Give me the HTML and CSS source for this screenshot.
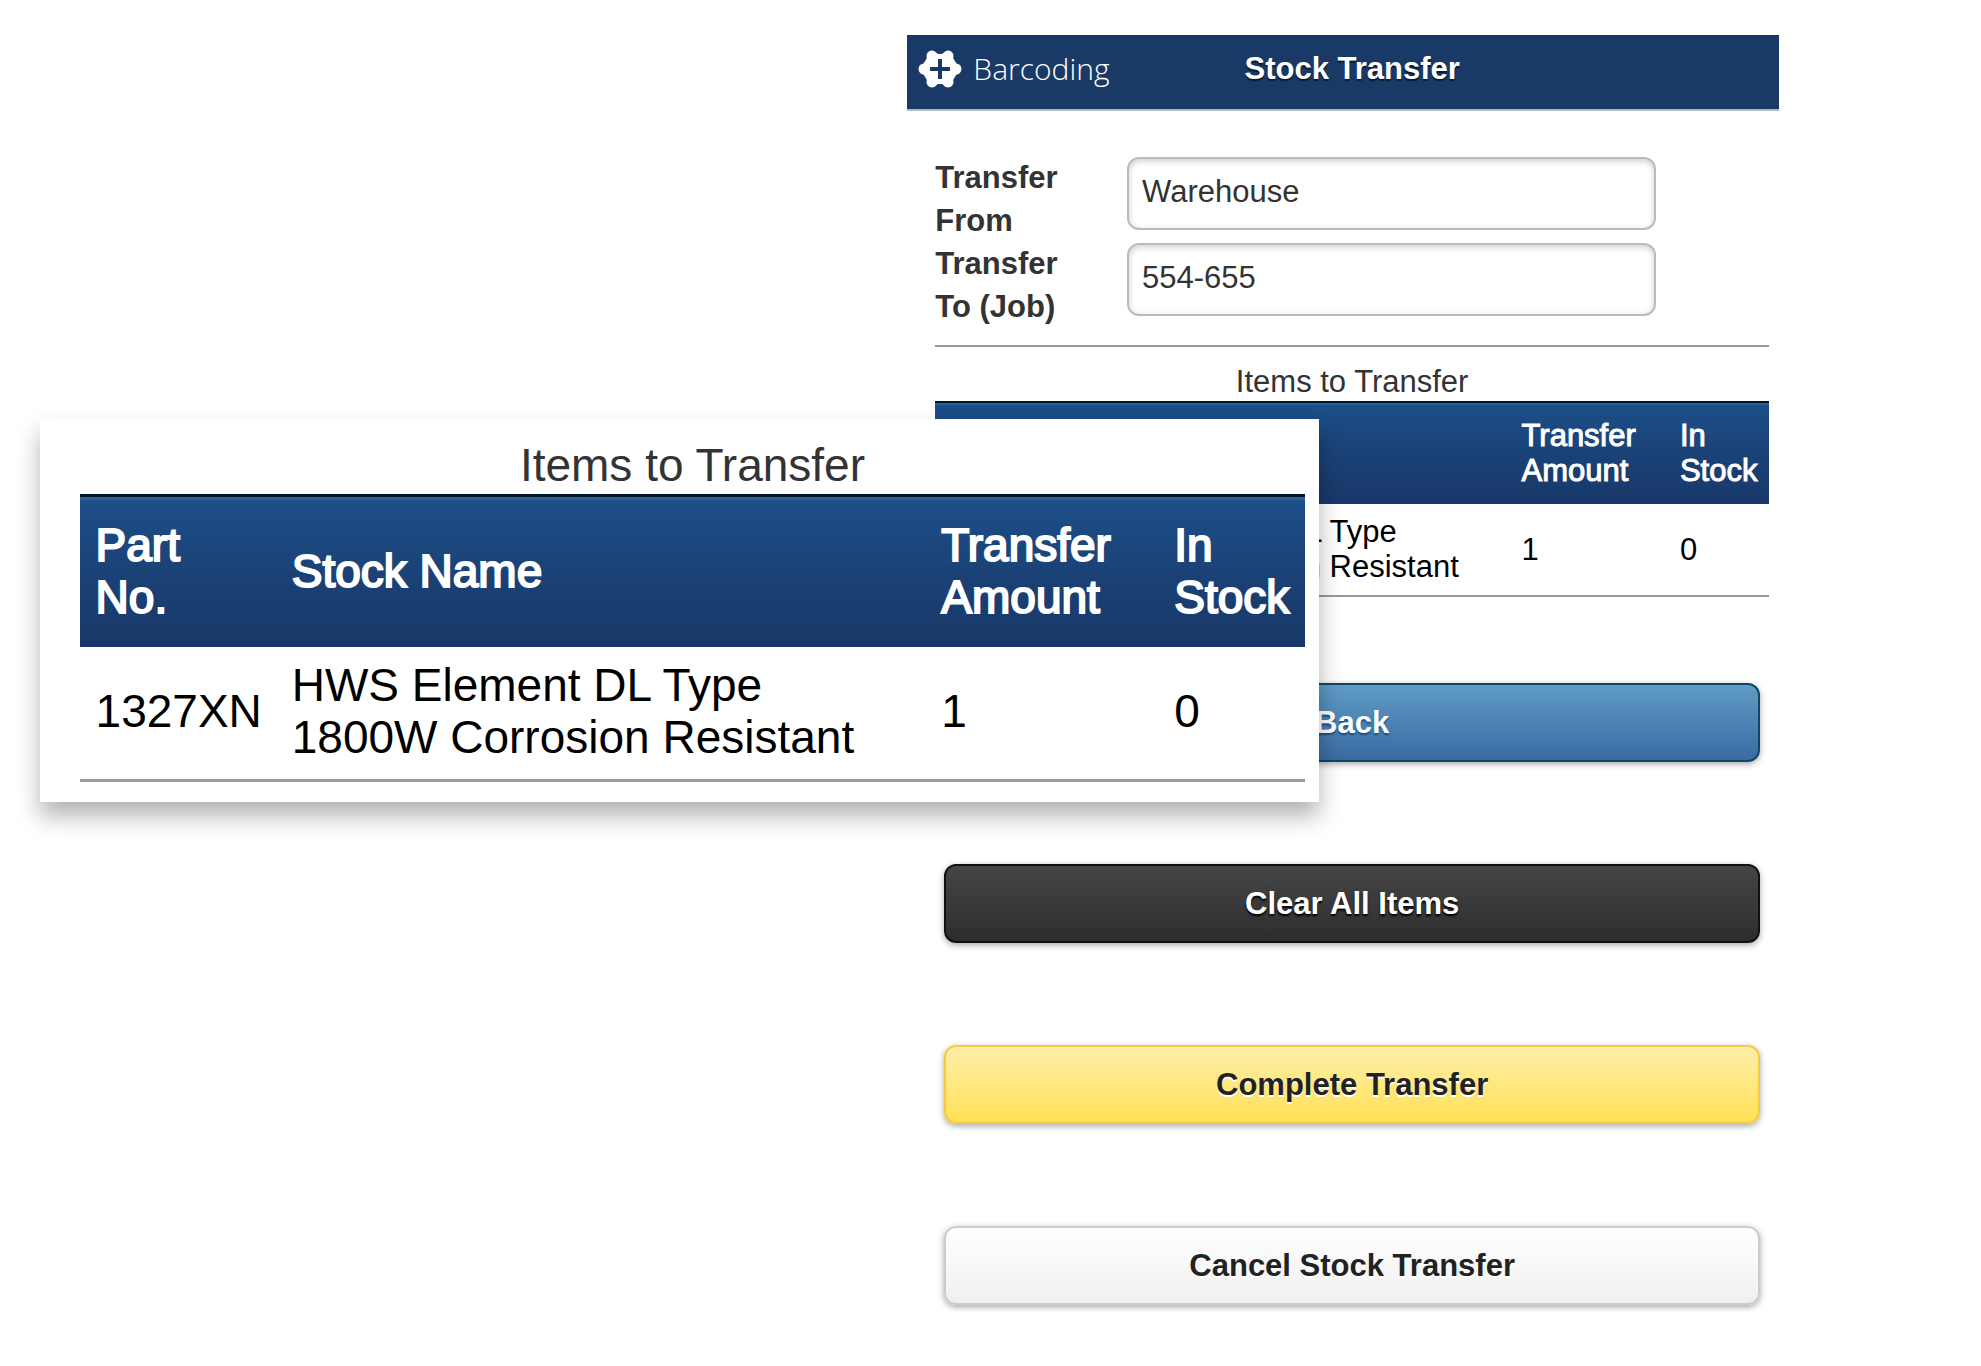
FILE: index.html
```html
<!DOCTYPE html>
<html lang="en">
<head>
  <meta charset="UTF-8" />
  <meta name="viewport" content="width=device-width, initial-scale=1.0" />
  <title>Stock Transfer</title>
  <link rel="stylesheet" href="styles.css">
</head>
<body>
  <main class="stage">
    <div class="screen">
      <header class="top-bar">
        <a class="brand" href="#">
          <svg class="brand-icon" viewBox="-22 -20 44 40" aria-hidden="true">
            <path d="M-18 0L-9-15Q0-12 9-15L18 0L9 15Q0 12-9 15Z" fill="#fff" stroke="#fff" stroke-width="3" stroke-linejoin="round" />
            <path d="M-16 0H16M-8-13L8 13M8-13L-8 13" stroke="#fff" stroke-width="11" stroke-linecap="round" />
            <path d="M-10 0H10M0-10V10" stroke="#193966" stroke-width="4" />
          </svg>
          <span>Barcoding</span>
        </a>
        <h1 class="title">Stock Transfer</h1>
      </header>

      <form class="content" onsubmit="return false">
        <div class="field">
          <label for="transfer-from">Transfer From</label>
          <input type="text" id="transfer-from" value="Warehouse">
        </div>
        <div class="field">
          <label for="transfer-to">Transfer To (Job)</label>
          <input type="text" id="transfer-to" value="554-655">
        </div>
        <hr>

        <table class="items">
          <caption>Items to Transfer</caption>
          <colgroup>
            <col class="col-part"><col class="col-name"><col class="col-amount"><col class="col-stock">
          </colgroup>
          <thead>
            <tr>
              <th>Part<br>No.</th>
              <th>Stock Name</th>
              <th>Transfer<br>Amount</th>
              <th>In<br>Stock</th>
            </tr>
          </thead>
          <tbody>
            <tr>
              <td>1327XN</td>
              <td>HWS Element DL Type<br>1800W Corrosion Resistant</td>
              <td>1</td>
              <td>0</td>
            </tr>
          </tbody>
        </table>

        <div class="actions">
          <button type="button" class="btn btn-blue">Back</button>
          <button type="button" class="btn btn-dark">Clear All Items</button>
          <button type="submit" class="btn btn-yellow">Complete Transfer</button>
          <button type="button" class="btn btn-light">Cancel Stock Transfer</button>
        </div>
      </form>
    </div>

    <!-- enlarged view of the items table, floats over the screen -->
    <section class="callout">
      <table class="items items-large">
        <caption>Items to Transfer</caption>
        <colgroup>
          <col class="col-part"><col class="col-name"><col class="col-amount"><col class="col-stock">
        </colgroup>
        <thead>
          <tr>
            <th>Part<br>No.</th>
            <th>Stock Name</th>
            <th>Transfer<br>Amount</th>
            <th>In<br>Stock</th>
          </tr>
        </thead>
        <tbody>
          <tr>
            <td>1327XN</td>
            <td>HWS Element DL Type<br>1800W Corrosion Resistant</td>
            <td>1</td>
            <td>0</td>
          </tr>
        </tbody>
      </table>
    </section>
  </main>
</body>
</html>
```

FILE: styles.css
```css
* {
  box-sizing: border-box;
  margin: 0;
  padding: 0;
}
body {
  font-family: "Liberation Sans", Arial, sans-serif;
  font-size: 31px;
  color: #333;
  background: #fff;
}
.stage {
  position: relative;
  padding: 35px 0 56px;
}
.screen {
  width: 44%;
  margin-left: auto;
  margin-right: 10.2%;
}

/* header */
.top-bar {
  display: grid;
  grid-template-columns: 1fr auto 1fr;
  align-items: center;
  height: 76px;
  padding: 0 0 7px 11px;
  background: #193966;
  border-bottom: 2px solid #b8b8c0;
}
.brand {
  display: flex;
  align-items: center;
  gap: 11px;
  color: #fff;
  font-family: "Open Sans", sans-serif;
  font-size: 30px;
  font-weight: 300;
  line-height: 40px;
  text-decoration: none;
}
.brand-icon {
  width: 44px;
  height: 40px;
}
.title {
  margin-left: 7px;
  font-size: 31px;
  line-height: 36px;
  color: #fff;
  text-shadow: 0 2px 1px #0b1a30;
}

/* form */
.content {
  padding: 45px 10px 0 28px;
}
.field {
  display: grid;
  grid-template-columns: 23% 63.5%;
  align-items: start;
}
.field label {
  padding-right: 40px;
  font-weight: bold;
  line-height: 43px;
}
.field input {
  width: 100%;
  height: 73px;
  margin-top: 1px;
  padding: 0 13px 4px;
  font: inherit;
  color: #333;
  background: #fff;
  border: 2px solid #bbb;
  border-radius: 12px;
  box-shadow: inset 0 2px 6px rgba(0, 0, 0, 0.2);
}
hr {
  height: 3px;
  margin: 17px 0 16px;
  border: none;
  border-top: 2px solid #999;
}

/* items table */
.items {
  width: 100%;
  table-layout: fixed;
  border-collapse: separate;
  border-spacing: 0;
  line-height: 35px;
}
.items caption {
  padding-bottom: 2px;
}
.col-part {
  width: 16%;
}
.col-name {
  width: 53%;
}
.col-amount {
  width: 19%;
}
.col-stock {
  width: 12%;
}
.items thead {
  background: linear-gradient(#1d4f8a, #1a4073 60%, #193768);
}
.items th {
  padding: 15px 0 16px 11px;
  font-weight: normal;
  text-align: left;
  color: #fff;
  border-top: 2px solid #03152c;
  box-shadow: inset 0 2px #27629a;
  -webkit-text-stroke: 1px #fff;
}
.items td {
  padding: 10px 0 11px 11px;
  color: #000;
  border-bottom: 2px solid #999;
}

/* callout */
.callout {
  position: absolute;
  top: 419px;
  left: 2%;
  width: 64.6%;
  padding: 20px 14px 20px 40px;
  background: #fff;
  box-shadow: 0 14px 22px rgba(0, 0, 0, 0.3);
}
.items-large {
  font-size: 46px;
  line-height: 52px;
}
.items-large caption {
  padding-bottom: 3px;
}
.items-large th {
  padding: 22px 0 24px 16px;
  border-top-width: 3px;
  box-shadow: inset 0 3px #27629a;
  -webkit-text-stroke-width: 2px;
}
.items-large td {
  padding: 12px 0 16px 16px;
  border-bottom-width: 3px;
}

/* buttons */
.actions {
  display: flex;
  flex-direction: column;
  gap: 102px;
  padding: 86px 9px 0;
}
.btn {
  height: 79px;
  font: bold 31px "Liberation Sans", Arial, sans-serif;
  border: 2px solid;
  border-radius: 12px;
  box-shadow: 0 2px 6px rgba(0, 0, 0, 0.35);
  cursor: pointer;
}
.btn-blue {
  color: #fff;
  background: linear-gradient(#5f9cc5, #396ba2);
  border-color: #0f4668;
  text-shadow: 0 2px 2px #194b7e;
}
.btn-dark {
  color: #fff;
  background: linear-gradient(#464646, #2d2d2d);
  border-color: #111;
  text-shadow: 0 2px 2px #000;
}
.btn-yellow {
  color: #222;
  background: linear-gradient(#ffefaa, #ffe155);
  border-color: #f7c942;
  text-shadow: 0 2px 0 #fff;
}
.btn-light {
  color: #222;
  background: linear-gradient(#fff, #f0f0f0);
  border-color: #ccc;
  text-shadow: 0 2px 0 #fff;
}
```
